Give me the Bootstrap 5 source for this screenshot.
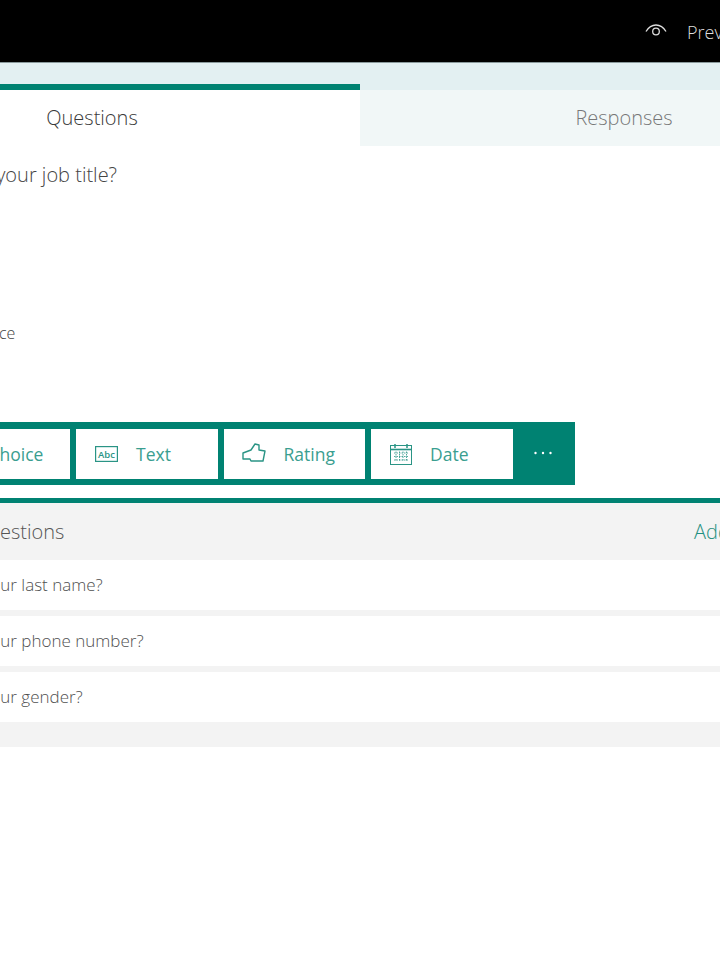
<!DOCTYPE html>
<html lang="en">

<head>
    <meta charset="UTF-8">
    <meta name="viewport" content="width=device-width, initial-scale=1.0">
    <link rel="stylesheet" href="https://cdn.jsdelivr.net/npm/bootstrap@5.3.0/dist/css/bootstrap.min.css">
    <title>Forms</title>
    <style>
        html, body {
            overflow: hidden;
            background: #fff;
        }

        body {
            font-family: "Open Sans", "Noto Sans", sans-serif;
            font-weight: 300;
            color: #333;
        }

        /* page is wider than the window and scrolled sideways */
        .form-page {
            width: 1200px;
            margin-left: -176px;
        }

        .top-bar {
            height: 63px;
            background: #000;
            border-bottom: 1px solid #8a9a9c;
            color: #ddd;
            font-size: 18px;
            padding-left: 821px;
            padding-top: 2px;
        }

        .preview-icon {
            margin-right: 20px;
        }

        .tab-band {
            background: #e3f0f2;
            padding-top: 21px;
        }

        .tab-one {
            width: 536px;
            height: 62px;
            background: #fff;
            border-top: 6px solid #008272;
            font-size: 20px;
            color: #3a3a3a;
        }

        .tab-two {
            width: 528px;
            height: 62px;
            border-top: 6px solid #e3f0f2;
            background: #f1f7f7;
            font-size: 20px;
            color: #777;
        }

        .job-title {
            height: 276px;
            padding-top: 14px;
            padding-left: 101px;
            font-size: 20px;
            color: #444;
        }

        .choice-label {
            margin-top: 131px;
            margin-left: -18px;
            font-size: 16px;
            color: #444;
        }

        .add-bar {
            width: 751px;
            height: 63px;
            background: #008272;
            padding: 7px 6px 6px 104.5px;
            gap: 6px;
        }

        .add-btn {
            width: 141.5px;
            height: 50px;
            background: #fff;
            color: #3a9e90;
            font-size: 17.5px;
            padding: 0 0 0 19px;
            gap: 18px;
            border: 0;
            border-radius: 0;
            font-weight: 400;
        }

        .add-btn svg {
            flex: none;
        }

        .thumb-icon {
            margin-left: -1px;
            margin-right: -1px;
            margin-bottom: 3px;
        }

        .more-btn {
            width: 48px;
            height: 48px;
            background: transparent;
            border: 0;
        }

        .suggest-box {
            margin-top: 13px;
            border-top: 5px solid #008272;
            background: #f3f3f3;
            padding-bottom: 25px;
        }

        .suggest-head {
            height: 57px;
            padding-left: 10px;
            font-size: 20px;
            color: #555;
        }

        .suggest-title {
            width: 860px;
        }

        .suggest-add {
            color: #1f9080;
        }

        .suggest-row {
            height: 50px;
            background: #fff;
            margin-bottom: 6px;
            font-size: 17px;
            color: #505050;
            padding-left: 98px;
        }

        .suggest-row:last-child {
            margin-bottom: 0;
        }
    </style>
</head>

<body>
    <div class="form-page">
        <div class="top-bar d-flex align-items-center text-nowrap">
            <svg class="preview-icon" width="22" height="18" viewBox="0 0 22 18" fill="none" stroke="#ddd" stroke-width="1.3">
                <path d="M1 8.500C4 3.500 7.500 2 11 2s7 1.500 10 6.500" />
                <circle cx="11" cy="8.500" r="3.300" />
            </svg>
            <span>Preview</span>
        </div>

        <div class="tab-band d-flex">
            <div class="tab-one d-flex align-items-center justify-content-center">Questions</div>
            <div class="tab-two d-flex align-items-center justify-content-center">Responses</div>
        </div>

        <div class="job-title text-nowrap">
            <div>What is your job title?</div>
            <div class="choice-label">Multiple choice</div>
        </div>

        <div class="add-bar d-flex">
            <button class="add-btn btn d-flex align-items-center">
                <svg width="23" height="18" viewBox="0 0 23 18" fill="none" stroke="#2a9485">
                    <circle cx="4" cy="4" r="3" />
                    <circle cx="4" cy="14" r="3" />
                    <path d="M10 4h12M10 14h12" />
                </svg>
                <span>Choice</span>
            </button>
            <button class="add-btn btn d-flex align-items-center">
                <svg width="23" height="16" viewBox="0 0 23 16" fill="none" stroke="#2a9485" stroke-width="1.200">
                    <rect x=".6" y=".6" width="21.800" height="14.800" />
                    <text x="11.500" y="11.500" text-anchor="middle" font-size="9.500" font-weight="600" fill="#2a9485"
                        stroke="none" font-family="Open Sans">Abc</text>
                </svg>
                <span>Text</span>
            </button>
            <button class="add-btn btn d-flex align-items-center">
                <svg class="thumb-icon" width="25" height="20" viewBox="-1 -1 25 20" fill="none" stroke="#2a9485" stroke-width="1.400"
                    stroke-linejoin="round">
                    <path d="M0 9l8-3 4-6 4 1v5l6 1-2 10H8l-1-2H0z" />
                </svg>
                <span>Rating</span>
            </button>
            <button class="add-btn btn d-flex align-items-center">
                <svg width="22" height="21" viewBox="0 0 22 21" fill="none" stroke="#2a9485">
                    <rect x=".5" y="1.500" width="21" height="19" />
                    <path d="M.5 5.500h21" stroke-width="1.600" />
                    <path d="M5 0v4M17 0v4" stroke-width="1.500" />
                    <path d="M4 9h14M4 12.500h14M4 16h14M6 7.500v10M9.500 7.500v10M13 7.500v10M16.500 7.500v10" stroke-width=".8"
                        stroke-dasharray="1.500 1" />
                </svg>
                <span>Date</span>
            </button>
            <button class="more-btn btn d-flex align-items-center justify-content-center p-0" aria-label="More">
                <svg width="20" height="4" viewBox="0 0 20 4" fill="#fff">
                    <circle cx="2.500" cy="2" r="1.200" />
                    <circle cx="10" cy="2" r="1.200" />
                    <circle cx="17.500" cy="2" r="1.200" />
                </svg>
            </button>
        </div>

        <div class="suggest-box">
            <div class="suggest-head d-flex align-items-center text-nowrap">
                <span class="suggest-title">Recommended questions</span>
                <span class="suggest-add">Add all</span>
            </div>
            <div class="suggest-row d-flex align-items-center text-nowrap">What is your last name?</div>
            <div class="suggest-row d-flex align-items-center text-nowrap">What is your phone number?</div>
            <div class="suggest-row d-flex align-items-center text-nowrap">What is your gender?</div>
        </div>
    </div>
</body>

</html>
